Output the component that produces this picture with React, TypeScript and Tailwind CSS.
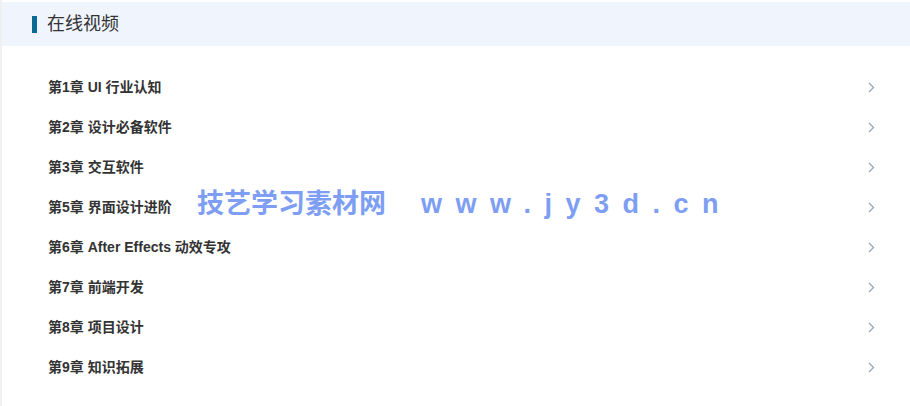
const chapters = [
  '第1章 UI 行业认知',
  '第2章 设计必备软件',
  '第3章 交互软件',
  '第5章 界面设计进阶',
  '第6章 After Effects 动效专攻',
  '第7章 前端开发',
  '第8章 项目设计',
  '第9章 知识拓展',
]

function Chevron() {
  return (
    <svg width="7" height="11" viewBox="0 0 7 11" className="shrink-0">
      <polyline points="1,1 5.5,5.5 1,10" fill="none" stroke="#8fa3b6" strokeWidth="1.2" />
    </svg>
  )
}

export default function App() {
  return (
    <div
      className="relative w-[910px] h-[406px] bg-white flex overflow-hidden"
      style={{ fontFamily: '"Liberation Sans", "Noto Sans CJK SC", sans-serif' }}
    >
      {/* left rail */}
      <div className="w-[2px] bg-[#f0f0f0] shrink-0" />

      <div className="flex-1 pt-[2px]">
        {/* Header */}
        <div className="h-[44px] bg-[#eff4fd] flex items-center pl-[30px]">
          <span className="w-[5px] h-[17px] bg-[#0b6a93]" />
          <h2 className="ml-[10px] text-[18px] text-[#333] leading-none">在线视频</h2>
        </div>

        {/* Chapter list */}
        <ul className="mt-[21px] pl-[46px] pr-[35px]">
          {chapters.map((c) => (
            <li key={c} className="h-[40px] flex items-center justify-between">
              <span className="text-[14px] font-bold text-[#333]">{c}</span>
              <Chevron />
            </li>
          ))}
        </ul>
      </div>

      {/* Watermark */}
      <div className="absolute left-[197px] top-[189px] flex items-center text-[#7d9ef3] font-bold text-[27px] leading-[30px] pointer-events-none">
        <span>技艺学习素材网</span>
        <span className="ml-[35px] tracking-[13.5px]">www.jy3d.cn</span>
      </div>
    </div>
  )
}
